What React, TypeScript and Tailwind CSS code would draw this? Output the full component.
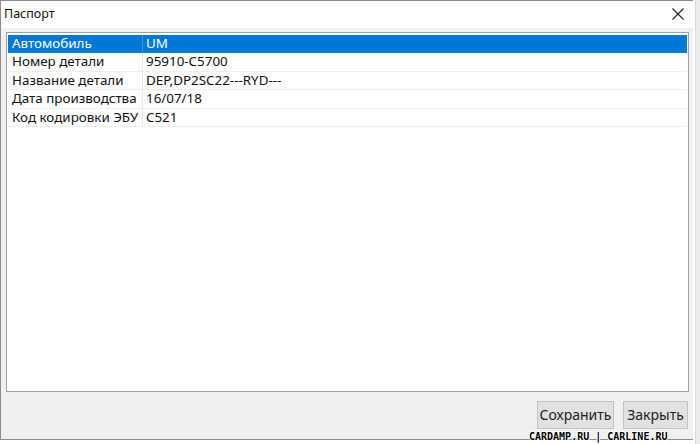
import React from "react";

const rows: [string, string][] = [
  ["Автомобиль", "UM"],
  ["Номер детали", "95910-C5700"],
  ["Название детали", "DEP,DP2SC22---RYD---"],
  ["Дата производства", "16/07/18"],
  ["Код кодировки ЭБУ", "C521"],
];

export default function App() {
  return (
    <div
      className="relative w-[700px] h-[444px] bg-white overflow-hidden flex"
      style={{ fontFamily: '"Noto Sans", "Open Sans", sans-serif' }}
    >
      <div className="w-[693px] h-[440px] flex flex-col border-l border-t border-b border-[#8c8c8c] bg-[#f0f0f0]">
        <div className="h-[27px] bg-white flex items-center justify-between pl-[3px] pr-[9px]">
          <span className="text-[12.5px] text-[#111] leading-none">Паспорт</span>
          <svg width="12" height="12" viewBox="0 0 12 12" className="mb-[1px]">
            <path d="M0.5 0.5 L11.5 11.5 M11.5 0.5 L0.5 11.5" stroke="#222" strokeWidth="1.1" />
          </svg>
        </div>
        <div className="flex-1 flex flex-col pl-[5px] pr-[4px] pt-[4px]">
          <div className="h-[360px] bg-white border border-[#a0a0a0] pt-[2px] pl-[1px] pr-[1px]">
            {rows.map(([k, v], i) => (
              <div
                key={k}
                className={
                  "flex h-[18.4px] text-[13.4px] leading-none items-center " +
                  (i === 0 ? "bg-[#0078d7] text-white" : "text-[#111] border-b border-[#efefef]")
                }
              >
                <div className={"w-[135px] h-full flex items-center pl-[4px] border-r " + (i === 0 ? "border-[#3f93dc]" : "border-[#eaeaea]")}>
                  {k}
                </div>
                <div className="flex-1 pl-[3px]">{v}</div>
              </div>
            ))}
          </div>
          <div className="flex justify-end gap-[9px] pt-[9px] pr-[1px]">
            <button className="w-[77px] h-[28px] bg-[#e1e1e1] border border-[#c4c4c4] text-[14px] text-[#222] leading-none">
              Сохранить
            </button>
            <button className="w-[65px] h-[28px] bg-[#e1e1e1] border border-[#c4c4c4] text-[14px] text-[#222] leading-none">
              Закрыть
            </button>
          </div>
        </div>
      </div>
      <div className="w-[7px] h-full flex">
        <div className="w-[2px] h-full bg-white" />
        <div className="flex-1 h-full bg-[#ececec] border-l border-[#dcdcdc]" />
      </div>
      <div
        className="absolute left-[529px] top-[431px] text-[10px] font-bold leading-[11px] text-black"
        style={{
          fontFamily: '"DejaVu Sans Mono", monospace',
          textShadow: "1px 0 #fff, -1px 0 #fff, 0 1px #fff, 0 -1px #fff",
        }}
      >
        CARDAMP.RU | CARLINE.RU
      </div>
    </div>
  );
}
